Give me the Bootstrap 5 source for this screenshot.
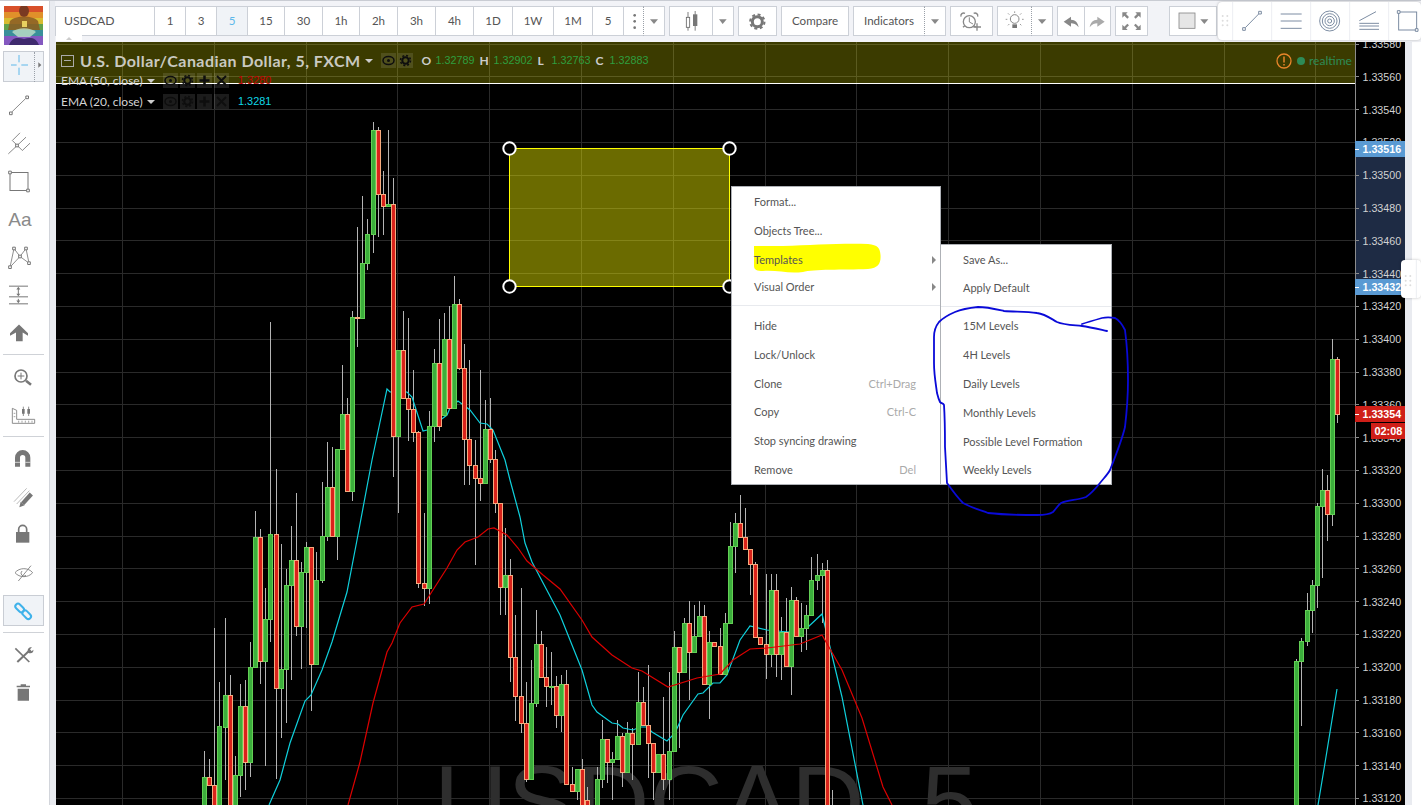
<!DOCTYPE html>
<html lang="en">
<head>
<meta charset="utf-8">
<title>USDCAD chart</title>
<link href="https://cdn.jsdelivr.net/npm/bootstrap@5.3.0/dist/css/bootstrap.min.css" rel="stylesheet">
<style>
html,body{height:100%;overflow:hidden}
body{background:#fff;font-family:"Lato","Noto Sans",sans-serif;color:#555;font-size:12px;width:1421px;height:805px;position:relative}
.app-shell{height:805px;border-top:1px solid #c9ccd3}
.side-rail{width:49px;flex:none;background:#fff;padding-top:5px}
.side-logo{display:block;width:39px;height:39px;margin:0 0 2.5px 4px}
.rail-item{height:38px;display:block;width:49px;position:relative}
.rail-item svg{display:block;position:relative}
.rail-active::before{content:"";position:absolute;left:3px;right:5px;top:3.5px;bottom:3.5px;background:#f0f3f7;border:1px solid #c9cdd4}
.rail-dots::after{content:"";position:absolute;left:34px;top:4px;bottom:4px;border-left:1px dotted #9aa0a8}
.rail-sep{height:6px;display:flex;align-items:center;padding:0 5px 0 3px}
.rail-sep i{display:block;height:1px;width:100%;background:#cfd2d7}
.gutter{width:7px;flex:none;background:#e9ebf0;border-left:1px solid #d2d5db}
.main-col{width:1365px;flex:none}
.top-tools{height:41px;background:#f2f3f7;padding-top:5px;flex:none;margin-left:-1px}
.tool{height:30px;padding:0;border:1px solid #ccd0d7;border-radius:0;background:#fff;color:#555;font-size:11.6px;line-height:28px;flex:none;display:block;margin-left:-1px}
.tool svg{display:block}
.tool-first{margin-left:0}
.tool-on{background:#f0f3f7;color:#5eb8ea}
.tool-split{border-left:1px dotted #9aa0a8}
.tool-text{font-size:11.6px;font-family:"Lato",sans-serif}
.sym-name{width:100px;text-align:left;padding-left:8px;font-size:12.2px;color:#555}
.w21{width:21px}.w22{width:22px}.w23{width:23px}.w27{width:27px}.w28{width:28px}.w32{width:32px}.w33{width:33px}.w35{width:35px}.w38{width:38px}.w39{width:39px}.w40{width:40px}.w42{width:42px}.w43{width:43px}.w44{width:44px}.w48{width:48px}.w68{width:68px}.w72{width:72px}
.push-right{margin-left:17px}
.collapse-tab{position:absolute;left:56px;top:35px;width:26px;height:6px;background:#fff}
.collapse-tab::after{content:"";position:absolute;left:10px;top:2px;border:3px solid transparent;border-top:0;border-bottom:3px solid #ccc}
.float-panel{position:absolute;background:#fff;border-radius:4px;box-shadow:0 0 3px rgba(0,0,0,.25);overflow:hidden}
.panel-top{left:1218px;top:2px;width:203px;height:38px}
.panel-side{left:1401px;top:260px;width:20px;height:38px}
.float-panel svg{display:block}
.chart-row{width:1365px;height:763px;background:#fff}
.chart-svg{display:block;width:1349px;height:763px;background:#000;flex:none}
.right-gutter{width:7px;flex:none;background:#e9ebf0}
.right-white{width:9px;flex:none;background:#fff}
.legend-box{position:absolute;left:61px;top:50px;color:#ccc;white-space:nowrap}
.legend-row{height:21px;display:flex;align-items:center}
.legend-row + .legend-row{margin-top:-1px}
.legend-row + .legend-row + .legend-row{margin-top:0}
.legend-title{font-size:16px;font-weight:700;letter-spacing:.46px;margin-left:6px;color:#c9c9c0;font-family:"Lato",sans-serif}
.collapse-box{width:13px;height:12px;border:1px solid #aaa;position:relative;flex:none}
.collapse-box::after{content:"";position:absolute;left:2px;right:2px;top:4px;height:1px;background:#aaa}
.leg-caret{border:4px solid transparent;border-top:4px solid #ccc;border-bottom:0;width:0;height:0;margin-left:4px}
.leg-icon{width:15px;height:15px;background:rgba(255,255,255,.11);margin-left:2px;display:block;flex:none}
.ohlc-l{font-size:12px;color:#ccc;font-weight:700;margin-left:5px;width:9px}
.ohlc-v{color:#2f9e3f;font-size:10.8px;font-family:"Liberation Sans",sans-serif;margin-left:5px;width:39px}
.ohlc-first{margin-left:9px}
.ema-name{font-size:12px;color:#d4d4d4;width:82px}
.ema-red{color:#c40000;margin-left:9px;font-size:10.9px;font-family:"Liberation Sans",sans-serif}
.ema-cyan{color:#10d8e8;margin-left:9px;font-size:10.9px;font-family:"Liberation Sans",sans-serif}
.rt-box{position:absolute;left:1276px;top:52px;height:18px;display:flex;align-items:center;color:#2e8b57;font-size:12px}
.rt-warn{display:block}
.rt-dot{width:8px;height:8px;border-radius:50%;background:#2e8b57;margin:0 4px 0 5px}
.ctx-menu{position:absolute;display:block;min-width:0;padding:1px 0 0;margin:0;border:1px solid #aeb1b6;border-radius:0;background:#fff;font-size:11px;font-family:"Lato",sans-serif;box-shadow:none;list-style:none}
.menu-main{left:731px;top:186px;width:210px;height:299px;z-index:3}
.menu-sub{left:940px;top:244px;width:172px;height:241px;z-index:3}
.ctx-item{height:28.8px;line-height:28.8px;padding:0 0 0 22px;color:#555;font-size:11px;display:flex;justify-content:space-between;position:relative;background:transparent}
.ctx-short{height:25px;line-height:25px}
.ctx-key{color:#aaa;margin-right:24px}
.ctx-arrow{position:absolute;right:4px;top:50%;margin-top:-4px;border:4px solid transparent;border-left:4px solid #888;border-right:0}
.ctx-line{height:12.6px;display:flex;align-items:center}
.ctx-line i{display:block;width:100%;height:1px;background:#e8eaee}
.ctx-label{position:relative}
.ink-blob{position:absolute;left:21px;top:-3px;width:128px;height:31px}
.ink-scrawl{position:absolute;left:925px;top:300px;width:210px;height:222px;z-index:4;pointer-events:none}
</style>
</head>
<body>
<div class="app-shell d-flex">
  <div class="side-rail d-flex flex-column">
    <svg class="side-logo" viewBox="0 0 39 39" role="img" aria-label="logo">
      <rect width="39" height="7" fill="#d8502a"/><rect y="6" width="39" height="7" fill="#e0902a"/><rect y="12" width="39" height="7" fill="#d8bc30"/><rect y="18" width="39" height="7" fill="#62a04a"/><rect y="24" width="39" height="7" fill="#3a8f9a"/><rect y="30" width="39" height="9" fill="#8458c0"/>
      <ellipse cx="20" cy="5" rx="5" ry="6" fill="#7a3a22"/><path d="M6 15C11 9 29 9 34 15L36 24H4Z" fill="#8a5a24" opacity=".85"/><path d="M8 26C14 21 26 21 32 26L26 31H14Z" fill="#bfe0c8" opacity=".8"/><path d="M5 39C8 31 14 31 20 33C26 31 32 31 35 39Z" fill="#3f2a6e"/><rect x="18" y="15" width="5" height="6" fill="#e8d060"/>
    </svg>
    <div class="rail-item rail-active rail-dots"><svg width="49" height="38" viewBox="0 57 147 114"><path d="M57 78V100M57 116V138M33 108H50M64 108H84" stroke="#5eb8ea" stroke-width="3" fill="none"/><path d="M115 100L124 108L115 116Z" fill="#777"/></svg></div>
    <div class="rail-item"><svg width="49" height="38" viewBox="0 136.5 147 114"><path d="M36 214L77 174" stroke="#777" stroke-width="2.5"/><path d="M28.500 214.500h8v8h-8zM77.500 166.500h8v8h-8z" fill="#fff" stroke="#777" stroke-width="3"/></svg></div>
    <div class="rail-item"><svg width="49" height="38" viewBox="0 250.5 147 114"><path d="M25 340L78 290M37 300L67 330M37 300L60 277M67 330L90 308" stroke="#777" stroke-width="2.600" fill="none"/><rect x="47" y="311" width="8" height="8" fill="#fff" stroke="#777" stroke-width="3"/></svg></div>
    <div class="rail-item"><svg width="49" height="38" viewBox="0 364.5 147 114"><rect x="30" y="396" width="54" height="54" fill="none" stroke="#777" stroke-width="3"/><path d="M26 392h8v8h-8zM80 446h8v8h-8z" fill="#fff" stroke="#777" stroke-width="3"/></svg></div>
    <div class="rail-item"><svg width="49" height="38" viewBox="0 478.5 147 114"><text x="25" y="556" font-family="Liberation Sans,sans-serif" font-size="57" fill="#8a8a8a">Aa</text></svg></div>
    <div class="rail-item"><svg width="49" height="38" viewBox="0 592.5 147 114"><path d="M42 624L30 680L60 648L42 624M60 648L78 624L87 668L60 648" fill="none" stroke="#777" stroke-width="2.500"/><path d="M38 620h8v8h-8zM74 620h8v8h-8zM56 644h8v8h-8zM26 676h8v8h-8zM83 664h8v8h-8z" fill="#fff" stroke="#777" stroke-width="3"/></svg></div>
    <div class="rail-item"><svg width="49" height="38" viewBox="0 706.5 147 114"><path d="M27 737H84M27 769H84M27 790H84M55 745V761M55 775V783" stroke="#777" stroke-width="3"/><path d="M49 747L55 739L61 747ZM49 760L55 767L61 760ZM49 780L55 788L61 780Z" fill="#777"/></svg></div>
    <div class="rail-item"><svg width="49" height="38" viewBox="0 820.5 147 114"><path d="M57 852L84 878V886L68 876V902H48V876L30 886V878Z" fill="#777"/></svg></div>
    <div class="rail-sep"><i></i></div>
    <div class="rail-item"><svg width="49" height="38" viewBox="0 954 147 114"><circle cx="63" cy="1008" r="18" fill="none" stroke="#777" stroke-width="5"/><path d="M63 998V1018M53 1008H73" stroke="#777" stroke-width="3"/><path d="M78 1022L93 1034" stroke="#777" stroke-width="8"/></svg></div>
    <div class="rail-item"><svg width="49" height="38" viewBox="0 -12 147 114"><path d="M37 25L50 31V58H104V70H37Z" fill="#fff" stroke="#777" stroke-width="2.500"/><path d="M70 20V48M86 20V48" stroke="#777" stroke-width="2.500"/><path d="M66 27h8v14h-8zM82 27h8v14h-8z" fill="#777"/><path d="M56 62V68M66 62V68M76 62V68M86 62V68M96 62V68M41 40H46M41 50H46" stroke="#777" stroke-width="2"/></svg></div>
    <div class="rail-sep"><i></i></div>
    <div class="rail-item"><svg width="49" height="38" viewBox="0 120 147 114"><path d="M45 200V173A23 23 0 0 1 91 173V200H76V173A8 8 0 0 0 60 173V200Z" fill="#777"/><path d="M45 187H60M76 187H91" stroke="#fff" stroke-width="2"/></svg></div>
    <div class="rail-item"><svg width="49" height="38" viewBox="0 234 147 114"><path d="M42 305L80 265M50 312L88 272" stroke="#bbb" stroke-width="3"/><path d="M94 282L68 311" stroke="#777" stroke-width="13"/><path d="M58 322L62 305L74 316Z" fill="#777"/></svg></div>
    <div class="rail-item"><svg width="49" height="38" viewBox="0 348 147 114"><rect x="48" y="396" width="40" height="32" fill="#777"/><path d="M56 396V388A12 12 0 0 1 80 388V396" fill="none" stroke="#777" stroke-width="5"/></svg></div>
    <div class="rail-item"><svg width="49" height="38" viewBox="0 462 147 114"><path d="M45 518C58 502 85 502 98 518C85 534 58 534 45 518Z" fill="none" stroke="#777" stroke-width="2.500"/><path d="M66 513A8 8 0 0 0 78 526" fill="none" stroke="#777" stroke-width="2.500"/><path d="M55 543L93 497" stroke="#777" stroke-width="2.500"/></svg></div>
    <div class="rail-item rail-active"><svg width="49" height="38" viewBox="0 576 147 114"><g fill="none" stroke="#3fb2ea" stroke-width="6"><rect x="-15" y="-8" width="30" height="16" rx="8" transform="translate(59 624) rotate(45)"/><rect x="-15" y="-8" width="30" height="16" rx="8" transform="translate(80 644) rotate(45)"/></g></svg></div>
    <div class="rail-sep"><i></i></div>
    <div class="rail-item"><svg width="49" height="38" viewBox="0 708 147 114"><path d="M46 745L88 786" stroke="#777" stroke-width="5"/><path d="M90 750L52 786" stroke="#777" stroke-width="6"/><path d="M84 758C80 745 90 740 96 742L90 748L95 754L100 749C102 756 94 764 84 758Z" fill="#777"/></svg></div>
    <div class="rail-item"><svg width="49" height="38" viewBox="0 822 147 114"><path d="M50 857H62V853H78V857H90V862H50ZM53 866H87V902H53Z" fill="#777"/></svg></div>
  </div>
  <div class="gutter"></div>
  <div class="main-col d-flex flex-column">
    <div class="top-tools d-flex gap-1">
      <div class="d-flex">
        <button class="btn tool tool-first sym-name">USDCAD</button>
        <button class="btn tool w32">1</button><button class="btn tool w32">3</button><button class="btn tool tool-on w32">5</button><button class="btn tool w38">15</button><button class="btn tool w39">30</button><button class="btn tool w38">1h</button><button class="btn tool w39">2h</button><button class="btn tool w39">3h</button><button class="btn tool w39">4h</button><button class="btn tool w40">1D</button><button class="btn tool w42">1W</button><button class="btn tool w40">1M</button><button class="btn tool w32">5</button>
        <button class="btn tool w21"><svg width="19" height="28" viewBox="428 21 57 84"><circle cx="460" cy="46" r="4" fill="#777"/><circle cx="460" cy="64" r="4" fill="#777"/><circle cx="460" cy="83" r="4" fill="#777"/></svg></button>
        <button class="btn tool tool-split w22"><svg width="20" height="28" viewBox="490 21 60 84"><path d="M508 58H532L520 72Z" fill="#888"/></svg></button>
      </div>
      <div class="d-flex">
        <button class="btn tool tool-first w44"><svg width="42" height="28" viewBox="568 21 126 84"><path d="M622 36V92M643.500 33V92" stroke="#666" stroke-width="2.500"/><rect x="617" y="52" width="10" height="30" fill="#fff" stroke="#666" stroke-width="2.500"/><rect x="637" y="43" width="13" height="35" fill="#777"/></svg></button>
        <button class="btn tool w22"><svg width="20" height="28" viewBox="698 21 60 84"><path d="M716 58H739L727 72Z" fill="#888"/></svg></button>
      </div>
      <button class="btn tool tool-first w39"><svg width="37" height="28" viewBox="777 21 111 84"><circle cx="832" cy="65" r="15" fill="none" stroke="#777" stroke-width="9"/><circle cx="832" cy="65" r="21.500" fill="none" stroke="#777" stroke-width="6" stroke-dasharray="9 7.900"/></svg></button>
      <button class="btn tool tool-first tool-text w68">Compare</button>
      <div class="d-flex">
        <button class="btn tool tool-first tool-text w72">Indicators</button>
        <button class="btn tool tool-split w22"><svg width="20" height="28" viewBox="1330 21 60 84"><path d="M1348 58H1372L1360 72Z" fill="#888"/></svg></button>
      </div>
      <button class="btn tool tool-first w43"><svg width="41" height="28" viewBox="0 21 123 84"><circle cx="55" cy="65" r="18" fill="none" stroke="#888" stroke-width="4"/><path d="M55 52V66L66 72" fill="none" stroke="#888" stroke-width="3"/><path d="M30 50C28 42 35 37 42 40M68 40C75 37 82 42 80 50M36 82L41 77M74 82L69 77" fill="none" stroke="#888" stroke-width="4"/><path d="M78 70V92M67 81H90" stroke="#888" stroke-width="4"/></svg></button>
      <div class="d-flex">
        <button class="btn tool tool-first w35"><svg width="33" height="28" viewBox="137 21 99 84"><circle cx="187" cy="57" r="13" fill="#fff" stroke="#888" stroke-width="3"/><path d="M180 73H194V84H180Z" fill="#777"/><path d="M187 34V39M167 40L171 44M207 40L203 44M160 58H165M209 58H214M167 76L171 72M207 76L203 72" stroke="#888" stroke-width="2.500"/></svg></button>
        <button class="btn tool tool-split w22"><svg width="20" height="28" viewBox="238 21 60 84"><path d="M256 58H281L268 72Z" fill="#888"/></svg></button>
      </div>
      <div class="d-flex">
        <button class="btn tool tool-first w28"><svg width="26" height="28" viewBox="318 21 78 84"><path d="M335 65L357 50V59C370 59 378 68 380 82C372 72 365 70 357 70V80Z" fill="#888"/></svg></button>
        <button class="btn tool w27"><svg width="25" height="28" viewBox="396 21 75 84"><path d="M455 65L433 50V59C420 59 412 68 410 82C418 72 425 70 433 70V80Z" fill="#aaa"/></svg></button>
      </div>
      <button class="btn tool tool-first w33"><svg width="31" height="28" viewBox="491 21 93 84"><path d="M510 37H526L521 42L530 51L525 56L516 47L510 53ZM565 37V53L559 47L550 56L545 51L554 42L549 37ZM510 90V74L516 80L525 71L530 76L521 85L526 90ZM565 90H549L554 85L545 76L550 71L559 80L565 74Z" fill="#888"/></svg></button>
      <button class="btn tool tool-first push-right w48"><svg width="46" height="28" viewBox="650 21 138 84"><rect x="677" y="39" width="48" height="46" fill="#e6e6e6" stroke="#888" stroke-width="2.500"/><path d="M741 58H765L753 72Z" fill="#888"/></svg></button>
    </div>
    <div class="chart-row d-flex">
      <svg class="chart-svg" id="chart" viewBox="56 42 1349 763" xmlns="http://www.w3.org/2000/svg"></svg>
      <div class="right-gutter"></div>
      <div class="right-white"></div>
    </div>
  </div>
</div>

<div class="collapse-tab"></div>

<div class="float-panel panel-top"><svg width="203" height="38" viewBox="804 6 609 114"><g fill="#ddd"><circle cx="818" cy="48" r="3"/><circle cx="832" cy="48" r="3"/><circle cx="818" cy="62" r="3"/><circle cx="832" cy="62" r="3"/><circle cx="818" cy="76" r="3"/><circle cx="832" cy="76" r="3"/></g><path d="M848 6V120M965 6V120M1082 6V120M1199 6V120M1316 6V120" stroke="#eceef2" stroke-width="3"/><g fill="none" stroke="#73849c" stroke-width="2.800"><path d="M886 83L926 42M992 42H1055M992 63H1055M992 85H1055M1228 62L1278 35M1228 70H1287M1228 78H1287M1228 88H1287"/><circle cx="1139" cy="63" r="30"/><circle cx="1139" cy="63" r="22"/><circle cx="1139" cy="63" r="14"/><circle cx="1139" cy="63" r="6"/><rect x="1346" y="36" width="54" height="54"/><path d="M878 83h8v8h-8zM926 34h8v8h-8zM1342 32h8v8h-8zM1396 86h8v8h-8z" fill="#fff"/></g></svg></div>
<div class="float-panel panel-side"><svg width="20" height="38" viewBox="0 0 60 114"><g fill="#ddd"><circle cx="14" cy="48" r="3"/><circle cx="28" cy="48" r="3"/><circle cx="14" cy="62" r="3"/><circle cx="28" cy="62" r="3"/><circle cx="14" cy="76" r="3"/><circle cx="28" cy="76" r="3"/></g><path d="M46 0V114" stroke="#eceef2" stroke-width="3"/></svg></div>

<div class="legend-box">
  <div class="legend-row"><span class="collapse-box"></span><span class="legend-title">U.S. Dollar/Canadian Dollar, 5, FXCM</span><span class="leg-caret"></span>
    <svg class="leg-icon ms-2" viewBox="0 0 15 15"><use href="#i-eye"/></svg><svg class="leg-icon" viewBox="0 0 15 15"><use href="#i-gear"/></svg>
    <span class="ohlc-l ohlc-first">O</span><span class="ohlc-v">1.32789</span><span class="ohlc-l">H</span><span class="ohlc-v">1.32902</span><span class="ohlc-l">L</span><span class="ohlc-v">1.32763</span><span class="ohlc-l">C</span><span class="ohlc-v">1.32883</span></div>
  <div class="legend-row"><span class="ema-name">EMA (50, close)</span><span class="leg-caret"></span><svg class="leg-icon ms-2" viewBox="0 0 15 15"><use href="#i-eye"/></svg><svg class="leg-icon" viewBox="0 0 15 15"><use href="#i-gear"/></svg><svg class="leg-icon" viewBox="0 0 15 15"><use href="#i-plus"/></svg><svg class="leg-icon" viewBox="0 0 15 15"><use href="#i-x"/></svg><span class="ema-red">1.3280</span></div>
  <div class="legend-row"><span class="ema-name">EMA (20, close)</span><span class="leg-caret"></span><svg class="leg-icon ms-2" viewBox="0 0 15 15"><use href="#i-eye"/></svg><svg class="leg-icon" viewBox="0 0 15 15"><use href="#i-gear"/></svg><svg class="leg-icon" viewBox="0 0 15 15"><use href="#i-plus"/></svg><svg class="leg-icon" viewBox="0 0 15 15"><use href="#i-x"/></svg><span class="ema-cyan">1.3281</span></div>
</div>
<svg width="0" height="0" class="position-absolute"><defs>
  <g id="i-eye"><ellipse cx="7.500" cy="7.500" rx="5.500" ry="4" fill="none" stroke="#0e0e0e" stroke-width="1.500"/><circle cx="7.500" cy="7.500" r="1.500" fill="#0e0e0e"/></g>
  <g id="i-gear"><circle cx="7.500" cy="7.500" r="3.200" fill="none" stroke="#0e0e0e" stroke-width="2"/><circle cx="7.500" cy="7.500" r="5" fill="none" stroke="#0e0e0e" stroke-width="1.500" stroke-dasharray="2 1.930"/></g>
  <g id="i-plus"><path d="M7.500 2.500V12.500M2.500 7.500H12.500" stroke="#0e0e0e" stroke-width="2.500"/></g>
  <g id="i-x"><path d="M3 3L12 12M12 3L3 12" stroke="#0e0e0e" stroke-width="1.800"/></g>
</defs></svg>

<div class="rt-box"><svg class="rt-warn" width="16" height="16" viewBox="0 0 16 16"><circle cx="8" cy="8" r="7" fill="none" stroke="#e8852a" stroke-width="1.300"/><path d="M8 3.500V9.500M8 11V12.500" stroke="#e8852a" stroke-width="1.500"/></svg><span class="rt-dot"></span><span>realtime</span></div>

<div class="dropdown-menu show ctx-menu menu-main">
  <div class="ctx-item"><span>Format...</span></div>
  <div class="ctx-item"><span>Objects Tree...</span></div>
  <div class="ctx-item"><svg class="ink-blob" viewBox="0 0 128 31"><path d="M1 3L30 3C60 2 90 0 115 1C125 2 127 5 127.500 12C128 20 126 25 115 26C90 27 60 26 50 29C35 31 25 27 10 28C4 28 1 27 1 23Z" fill="#ffff00"/></svg><span class="ctx-label">Templates</span><span class="ctx-arrow"></span></div>
  <div class="ctx-item ctx-short"><span>Visual Order</span><span class="ctx-arrow"></span></div>
  <div class="ctx-line"><i></i></div>
  <div class="ctx-item"><span>Hide</span></div>
  <div class="ctx-item"><span>Lock/Unlock</span></div>
  <div class="ctx-item"><span>Clone</span><span class="ctx-key">Ctrl+Drag</span></div>
  <div class="ctx-item"><span>Copy</span><span class="ctx-key">Ctrl-C</span></div>
  <div class="ctx-item"><span>Stop syncing drawing</span></div>
  <div class="ctx-item"><span>Remove</span><span class="ctx-key">Del</span></div>
</div>
<div class="dropdown-menu show ctx-menu menu-sub">
  <div class="ctx-item"><span>Save As...</span></div>
  <div class="ctx-item ctx-short"><span>Apply Default</span></div>
  <div class="ctx-line"><i></i></div>
  <div class="ctx-item"><span>15M Levels</span></div>
  <div class="ctx-item"><span>4H Levels</span></div>
  <div class="ctx-item"><span>Daily Levels</span></div>
  <div class="ctx-item"><span>Monthly Levels</span></div>
  <div class="ctx-item"><span>Possible Level Formation</span></div>
  <div class="ctx-item"><span>Weekly Levels</span></div>
</div>
<svg class="ink-scrawl" viewBox="925 300 210 222"><path d="M1107 331C1098 329 1090 327 1082 326C1072 325 1064 325 1057 322C1050 318 1045 314 1037 313C1026 311 1015 312 1004 311C995 309 987 307 978 307C968 308 962 309 955 312C948 315 943 318 939 322C935 327 934 331 934 337L934 363C934 375 936 385 937 393C938 397 939 400 940 402C942 404 943 403 944 405C945 420 945 435 945 447L947 483C952 490 957 497 963 503C970 507 980 510 988 513C1005 515 1020 515 1037 515C1045 515 1050 514 1053 512C1056 509 1058 505 1061 503C1068 500 1078 500 1086 497C1092 493 1096 488 1100 483C1104 478 1108 474 1110 470C1116 455 1122 440 1125 427C1127 410 1128 395 1128 380C1128 365 1127 345 1125 330C1122 324 1119 320 1115 318C1110 317 1106 317 1102 318C1095 320 1088 322 1082 324" fill="none" stroke="#0a0ad8" stroke-width="1.800" stroke-linecap="round" stroke-linejoin="round"/></svg>

<script src="https://cdn.jsdelivr.net/npm/bootstrap@5.3.0/dist/js/bootstrap.bundle.min.js"></script>
<script>
var C=[[204,'g',777,810,751,810],[209,'r',777,785,759,785],[214,'r',785,900,628,900],[219,'g',726,900,682,900],[225,'g',695,727,618,780],[230,'r',695,900,675,900],[235,'g',775,900,756,900],[240,'g',706,775,684,797],[245,'r',706,762,680,790],[250,'g',667,762,642,777],[255,'g',537,667,511,668],[260,'r',537,661,529,684],[265,'g',619,661,588,766],[270,'g',534,619,322,642],[276,'r',534,688,469,779],[281,'g',669,688,544,738],[286,'g',585,669,569,723],[291,'g',560,585,526,680],[296,'r',560,626,493,636],[301,'g',572,626,562,669],[306,'g',547,572,542,628],[311,'r',547,664,547,711],[316,'g',580,664,552,664],[322,'g',536,580,482,583],[327,'g',487,536,442,541],[332,'r',487,536,447,536],[337,'g',449,536,449,560],[342,'g',414,449,365,449],[347,'r',414,491,398,491],[352,'g',317,491,311,501],[357,'r',317,318,227,347],[362,'g',263,318,196,318],[367,'g',234,263,219,270],[373,'g',130,234,122,253],[378,'r',130,194,127,237],[383,'r',194,206,171,235],[388,'g',204,206,130,206],[393,'r',204,436,178,477],[398,'g',350,436,350,513],[403,'r',350,398,311,398],[408,'r',398,409,318,441],[413,'r',409,432,370,442],[418,'r',432,583,431,588],[424,'r',583,588,513,606],[429,'g',426,588,411,604],[434,'g',363,426,349,442],[439,'r',363,426,319,431],[444,'g',339,415,313,415],[449,'r',339,408,306,408],[454,'g',304,408,276,408],[459,'r',304,368,299,370],[464,'r',368,439,344,485],[469,'r',439,465,360,485],[475,'r',465,478,440,565],[480,'r',478,483,370,501],[485,'g',429,483,400,483],[490,'r',429,459,398,463],[495,'r',459,503,450,513],[500,'r',503,587,503,615],[505,'g',575,587,528,615],[510,'r',575,657,559,682],[515,'r',657,696,615,721],[521,'r',696,723,588,733],[526,'r',723,779,682,782],[531,'g',703,779,660,779],[536,'g',644,703,610,707],[541,'r',644,677,631,677],[546,'r',677,686,647,707],[551,'g',686,687,652,705],[556,'r',686,715,676,728],[561,'g',684,715,675,732],[566,'r',684,784,670,784],[572,'r',784,791,767,791],[577,'g',769,791,769,800],[582,'r',769,810,759,810],[587,'r',800,810,787,810],[597,'g',779,810,767,810],[602,'g',739,779,720,788],[607,'r',739,762,739,783],[612,'g',759,762,752,800],[617,'g',736,759,720,759],[622,'r',736,772,733,787],[627,'g',733,772,722,772],[632,'r',733,744,728,780],[638,'g',702,744,672,744],[643,'r',702,725,687,725],[648,'r',725,743,665,778],[653,'r',743,772,743,800],[658,'g',754,772,754,772],[663,'r',754,779,697,790],[669,'g',751,779,672,800],[674,'g',647,751,631,751],[679,'r',647,672,647,748],[684,'g',623,672,618,672],[689,'r',623,652,601,700],[694,'g',636,652,605,652],[699,'g',616,636,601,636],[704,'r',616,684,605,684],[709,'g',642,684,631,719],[714,'r',642,646,642,646],[720,'r',646,674,628,674],[725,'g',623,674,613,674],[730,'g',546,623,522,623],[735,'g',523,546,513,573],[740,'r',523,537,495,537],[745,'r',537,549,508,549],[750,'r',549,564,549,595],[755,'r',564,637,562,637],[760,'r',637,644,637,644],[766,'r',644,654,574,679],[771,'g',590,654,574,667],[776,'r',590,654,574,677],[781,'g',632,654,617,680],[786,'r',632,666,598,666],[791,'g',600,666,587,695],[796,'r',600,636,597,636],[801,'g',628,636,603,652],[806,'g',615,628,605,650],[811,'g',580,615,557,615],[817,'g',575,580,554,590],[822,'g',570,575,563,623],[827,'r',570,810,560,810],[832,'r',805,805,790,810],[1296,'g',661,810,659,810],[1301,'g',641,661,638,726],[1307,'g',610,641,593,646],[1312,'g',585,610,580,633],[1317,'g',506,585,503,608],[1322,'g',490,506,469,578],[1327,'r',490,514,475,541],[1332,'g',359,514,339,526],[1337,'r',359,414,357,423]];
var CY="269,805 280,780 290,743 305,701 311,695 322,670 332,642 347,592 357,540 372,460 387,389 390,392 407,392 412,397 423,431 427,430 447,415 450,408 458,401 470,410 480,423 487,424 493,430 505,460 510,480 520,517 525,543 532,562 560,615 582,670 592,705 597,712 612,723 618,724 623,728 633,730 640,727 647,727 652,732 667,741 675,733 683,715 698,694 703,693 713,683 720,683 727,675 740,640 750,626 767,630 788,632 807,628 822,614 830,647 842,697 863,805";
var CY2="1318,805 1325,763 1337,689";
var RD="348,805 360,762 373,703 387,652 392,643 400,623 412,607 424,604 447,568 457,550 465,542 478,537 488,529 494,528 507,535 518,548 527,561 543,575 560,589 582,620 592,637 612,655 632,668 642,671 668,687 697,678 720,674 733,660 750,649 767,648 800,644 822,635 842,670 862,718 883,787 892,805";
var h='',i,y,p;
for(i=0;i<15;i++){var vx=122+91.8*i;h+='<path d="M'+(Math.round(vx)+.5)+' 42V805" stroke="#2a2a2a"/>';}
var P=[];for(i=0;i<24;i++){y=43.5+32.8*i;P.push(y);h+='<path d="M56 '+(Math.round(y)+.5)+'H1355" stroke="#2a2a2a"/>';}
h+='<text x="706" y="837" text-anchor="middle" font-family="Liberation Sans,sans-serif" font-size="102" fill="#2e2e2e">USDCAD, 5</text>';
h+='<rect x="56" y="42" width="1299" height="41" fill="#ffff00" opacity=".23"/><path d="M56 83.500H1355" stroke="#fff"/>';
C.forEach(function(c){h+='<path d="M'+(c[0]+.5)+' '+c[4]+'V'+c[5]+'" stroke="#b4b4b4"/>';});
h+='<polyline points="'+CY+'" fill="none" stroke="#0fd0dc" stroke-width="1.200"/><polyline points="'+CY2+'" fill="none" stroke="#0fd0dc" stroke-width="1.200"/>';
C.forEach(function(c){if(c[3]<=c[2])return;var g=c[1]=='g';h+='<rect x="'+(c[0]-1.5)+'" y="'+(c[2]+.5)+'" width="4" height="'+(c[3]-c[2])+'" fill="'+(g?'#3cae3c':'#d9231b')+'" stroke="'+(g?'#63cf55':'#f6ab7e')+'"/>';});
h+='<polyline points="'+RD+'" fill="none" stroke="#dc0000" stroke-width="1.200"/>';
h+='<rect x="509.500" y="148.500" width="220" height="138" fill="#ffff00" fill-opacity=".42" stroke="#ffff00"/>';
[[509.5,148.5],[729.5,148.5],[509.5,286.5],[729.5,286.5]].forEach(function(q){h+='<circle cx="'+q[0]+'" cy="'+q[1]+'" r="6.200" fill="#000" stroke="#fff" stroke-width="2"/>';});
h+='<rect x="1355" y="42" width="50" height="763" fill="#000"/><rect x="1355" y="157" width="50" height="122" fill="#1e2b44"/><path d="M1355.500 42V805" stroke="#8c8c8c"/>';
for(i=0;i<24;i++){y=P[i];h+='<path d="M1355 '+(Math.round(y)+.5)+'H1359" stroke="#8c8c8c"/><text x="1362.500" y="'+(y+4.5)+'" font-family="Liberation Sans,sans-serif" font-size="10.700" font-weight="400" fill="#d2d2d2">'+(1.3358-i*.0002).toFixed(5)+'</text>';}
function tag(y,t,f){h+='<rect x="1355" y="'+y+'" width="50" height="16" fill="'+f+'"/><path d="M1355 '+(y+8.5)+'H1359" stroke="#fff"/><text x="1362.500" y="'+(y+12)+'" font-family="Liberation Sans,sans-serif" font-size="10.700" font-weight="700" fill="#fff">'+t+'</text>';}
tag(141,'1.33516','#5a9ad3');tag(279,'1.33432','#5a9ad3');tag(406,'1.33354','#cf1f18');
h+='<rect x="1371" y="423" width="34" height="16" fill="#cf1f18"/><text x="1374.500" y="435" font-family="Liberation Sans,sans-serif" font-size="10.900" font-weight="700" fill="#fff">02:08</text>';
document.getElementById('chart').innerHTML=h;
</script>
</body>
</html>
